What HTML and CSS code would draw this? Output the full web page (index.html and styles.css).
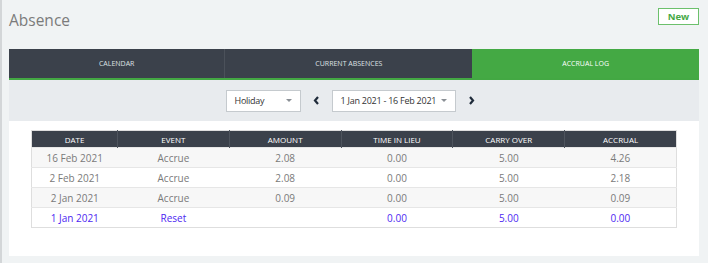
FILE: index.html
```html
<!DOCTYPE html>
<html lang="en">
<head>
  <meta charset="UTF-8" />
  <meta name="viewport" content="width=device-width, initial-scale=1.0"/>
  <title>Absence</title>
  <link rel="stylesheet" href="styles.css">
</head>
<body>

  <div class="page">
    <header class="page-header">
      <h1>Absence</h1>
      <button class="btn-new">New</button>
    </header>

    <nav class="tabs">
      <a class="tab">Calendar</a>
      <a class="tab">Current Absences</a>
      <a class="tab active">Accrual Log</a>
    </nav>

    <!-- Filtros -->
    <div class="filters">
      <div class="select select-type">
        <span>Holiday</span>
        <span class="caret"></span>
      </div>
      <button class="nav-arrow">
        <svg width="7" height="9" viewBox="0 0 7 9"><polyline points="5,1 2,4.5 5,8" fill="none" stroke="#1f2b3a" stroke-width="2.2"/></svg>
      </button>
      <div class="select select-range">
        <span>1 Jan 2021 - 16 Feb 2021</span>
        <span class="caret"></span>
      </div>
      <button class="nav-arrow">
        <svg width="7" height="9" viewBox="0 0 7 9"><polyline points="2,1 5,4.5 2,8" fill="none" stroke="#1f2b3a" stroke-width="2.2"/></svg>
      </button>
    </div>

    <div class="panel">
      <table class="log">
        <colgroup>
          <col class="col-date">
          <col><col><col><col><col>
        </colgroup>
        <thead>
          <tr>
            <th>Date</th>
            <th>Event</th>
            <th>Amount</th>
            <th>Time in Lieu</th>
            <th>Carry Over</th>
            <th>Accrual</th>
          </tr>
        </thead>
        <tbody>
          <tr>
            <td>16 Feb 2021</td><td>Accrue</td><td>2.08</td><td>0.00</td><td>5.00</td><td>4.26</td>
          </tr>
          <tr>
            <td>2 Feb 2021</td><td>Accrue</td><td>2.08</td><td>0.00</td><td>5.00</td><td>2.18</td>
          </tr>
          <tr>
            <td>2 Jan 2021</td><td>Accrue</td><td>0.09</td><td>0.00</td><td>5.00</td><td>0.09</td>
          </tr>
          <tr class="reset">
            <td>1 Jan 2021</td><td>Reset</td><td></td><td>0.00</td><td>5.00</td><td>0.00</td>
          </tr>
        </tbody>
      </table>
    </div>
  </div>

</body>
</html>
```

FILE: styles.css
```css
body {
  margin: 0;
  font-family: 'Open Sans', 'Liberation Sans', sans-serif;
  background: #f0f3f4;
  color: #333;
  border-left: 2px solid #d3d6d8;
  min-height: 263px;
  box-sizing: border-box;
}

.page {
  padding: 0 9px 0 7px;
}

.page-header {
  display: flex;
  justify-content: space-between;
  align-items: flex-start;
  height: 49px;
}

h1 {
  margin: 9px 0 0;
  font-size: 15.5px;
  font-weight: 400;
  color: #7b7b7b;
}

.btn-new {
  margin-top: 8px;
  width: 41px;
  height: 17px;
  padding: 0;
  border: 1px solid #6cc06c;
  background: #fff;
  color: #46a946;
  font-family: inherit;
  font-size: 9.5px;
  font-weight: 700;
}

/* Tabs */
.tabs {
  display: flex;
  height: 29px;
  background: #3b414b;
  border-bottom: 2px solid #43a843;
}

.tab {
  flex: auto;
  display: flex;
  align-items: center;
  justify-content: center;
  font-size: 7px;
  text-transform: uppercase;
  color: #dfe1e4;
  border-left: 1px solid #4b515a;
}

.tab:first-child {
  border-left: none;
}

.tab.active {
  background: #44a944;
  color: #fff;
  border-left: none;
}

/* Filtros */
.filters {
  display: flex;
  justify-content: center;
  align-items: center;
  gap: 12px;
  height: 41px;
  background: #e8ebee;
  padding-right: 8px;
}

.select {
  display: flex;
  align-items: center;
  justify-content: space-between;
  height: 22px;
  box-sizing: border-box;
  padding: 0 8px;
  background: #fff;
  border: 1px solid #c5cace;
  font-size: 9px;
  letter-spacing: -0.25px;
  color: #333;
  white-space: nowrap;
}

.select-type {
  width: 75px;
}

.select-range {
  width: 124px;
}

.caret {
  width: 0;
  height: 0;
  border-left: 3px solid transparent;
  border-right: 3px solid transparent;
  border-top: 3px solid #8a8f95;
}

.nav-arrow {
  display: flex;
  padding: 0;
  border: none;
  background: none;
}

/* Tabla */
.panel {
  background: #fff;
  padding: 9px 22px 28px 22px;
}

.log {
  width: 100%;
  border-collapse: collapse;
  table-layout: fixed;
  border: 1px solid #dedede;
}

.col-date {
  width: 86px;
}

.log th {
  height: 16px;
  padding: 0;
  background: #3b414b;
  color: #fff;
  font-size: 8px;
  font-weight: 400;
  text-transform: uppercase;
  border-left: 1px solid #4e545d;
}

.log th:first-child {
  border-left: none;
}

.log td {
  height: 19px;
  padding: 0;
  text-align: center;
  font-size: 10px;
  color: #7a7a7a;
  border-top: 1px solid #e6e6e6;
}

.log tbody tr:nth-child(odd) {
  background: #f7f7f7;
}

.log tr.reset td {
  color: #4d27f2;
}
```
